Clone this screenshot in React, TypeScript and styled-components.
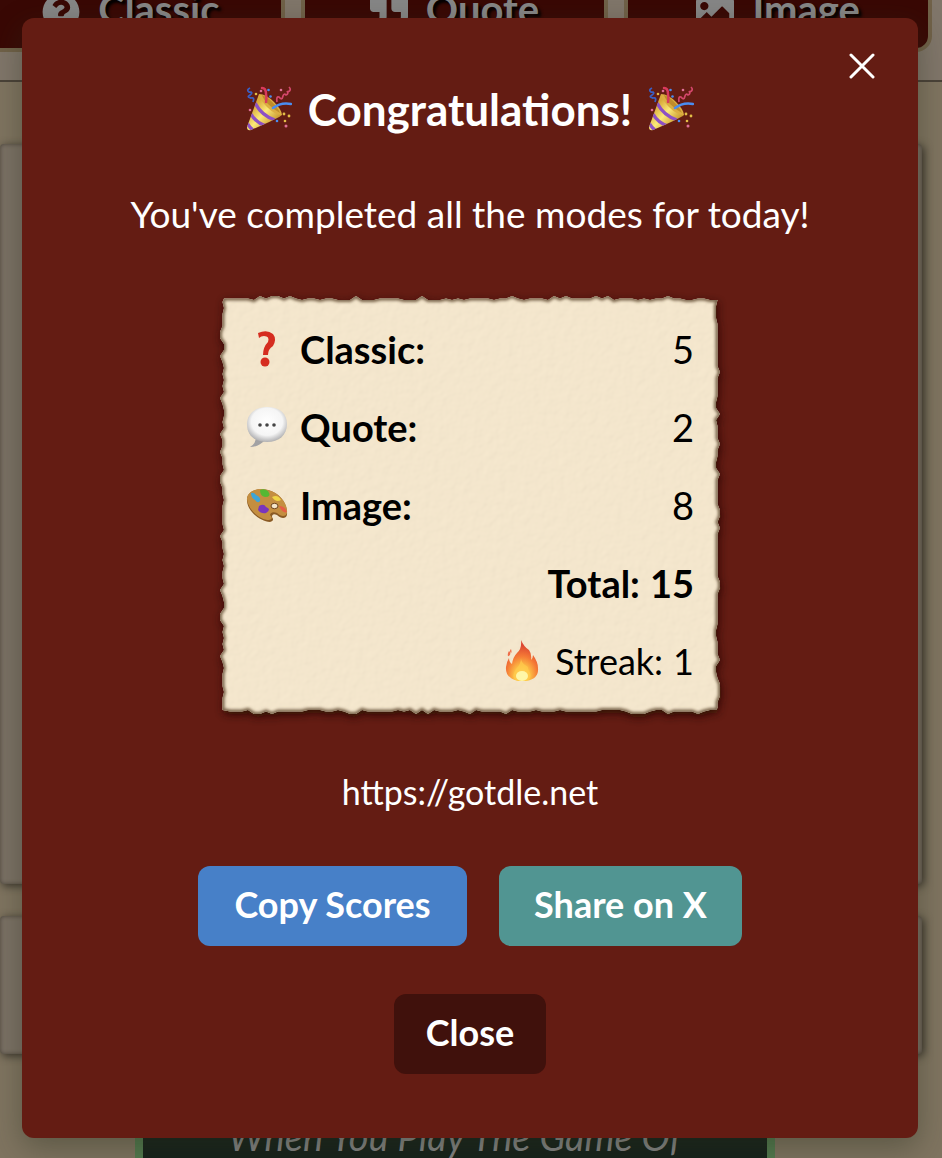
import React from "react";
import styled, { createGlobalStyle } from "styled-components";
import { FaImage, FaQuestionCircle, FaQuoteRight } from "react-icons/fa";

const GlobalStyle = createGlobalStyle`
  *, *::before, *::after { box-sizing: border-box; }
  body {
    margin: 0;
    background: #7f7460;
    font-family: Lato, "Liberation Sans", sans-serif;
  }
  h2, p, dl, dt, dd { margin: 0; }
  svg { display: block; flex: none; }
`;

const Screen = styled.div`
  position: relative;
  min-height: 100vh;
  overflow: hidden;
`;

/* ---------- dimmed page behind the dialog ---------- */

const Backdrop = styled.div`
  position: absolute;
  inset: 0;
  display: flex;
  flex-direction: column;
  overflow: hidden;
  background: #7f7460;
`;

const ModeBar = styled.nav`
  display: flex;
  gap: 16px;
  flex: none;
  margin-top: -48px;
  padding: 0 10px 28px 0;
  margin-left: -23px;
  background: #80766a;
  border-bottom: 2px solid #4a4238;
`;

const ModeTab = styled.button`
  display: flex;
  flex: 1;
  align-items: center;
  justify-content: center;
  gap: 18px;
  height: 100px;
  padding: 20px 0 0;
  border: 4px solid #706148;
  border-radius: 16px;
  background: #390804;
  color: #868686;
  font-family: inherit;
  font-size: 40px;
  line-height: 48px;
  font-weight: 700;
  text-shadow: 3px 3px 3px #000;
`;

const ModeName = styled.span`
  padding-bottom: 6px;
`;

const PaperPanel = styled.div<{ $height: number; $gap: number }>`
  flex: none;
  height: ${(p) => p.$height}px;
  margin: ${(p) => p.$gap}px 20px 0 0;
  border-radius: 4px;
  background: #7b7165;
  box-shadow: 2px 2px 8px #38322a, inset 0 0 4px #4b443b;
`;

const QuoteBox = styled.blockquote`
  flex: none;
  align-self: center;
  width: 640px;
  max-width: 80%;
  margin: 34px 32px 0 0;
  padding: 24px 0;
  border: 8px solid #527a4e;
  border-top-width: 0;
  background: #16211a;
  color: #858585;
  font-size: 38px;
  line-height: 48px;
  font-style: italic;
  text-align: center;
  white-space: nowrap;
`;

/* ---------- dialog ---------- */

const DialogLayer = styled.div`
  position: relative;
  min-height: 100vh;
  padding: 18px 24px 20px 22px;
`;

const Dialog = styled.section`
  position: relative;
  display: flex;
  flex-direction: column;
  align-items: center;
  padding: 66px 24px 64px;
  border-radius: 12px;
  background: #641c13;
  color: #fff;
  box-shadow: 0 10px 30px rgba(40, 44, 28, 0.4);
`;

const DismissButton = styled.button`
  position: absolute;
  top: 24px;
  right: 32px;
  display: grid;
  place-items: center;
  width: 48px;
  height: 48px;
  padding: 0;
  border: 0;
  background: none;
  color: #fff;
`;

const Title = styled.h2`
  display: flex;
  align-items: center;
  gap: 16px;
  font-size: 44px;
  line-height: 50px;
  font-weight: 700;
`;

const Message = styled.p`
  margin-top: 56px;
  font-size: 37px;
  line-height: 48px;
`;

const Parchment = styled.div`
  position: relative;
  width: 500px;
  max-width: 100%;
  margin-top: 58px;
  padding: 14px 26px;
  color: #000;
  font-size: 38px;
  line-height: 48px;
`;

const ParchmentSheet = styled.svg`
  position: absolute;
  inset: 0;
  width: 100%;
  height: 100%;
  overflow: visible;
`;

const ScoreList = styled.dl`
  position: relative;
`;

const ScoreRow = styled.div<{ $end?: boolean; $bold?: boolean }>`
  display: flex;
  align-items: center;
  justify-content: ${(p) => (p.$end ? "flex-end" : "space-between")};
  gap: 10px;
  height: 78px;
  font-size: ${(p) => (p.$end && !p.$bold ? 36 : 38)}px;
  font-weight: ${(p) => (p.$bold ? 700 : 400)};
`;

const ScoreName = styled.dt<{ $bold?: boolean }>`
  display: flex;
  align-items: center;
  gap: 12px;
  font-weight: ${(p) => (p.$bold ? 700 : 400)};
`;

const SiteLink = styled.a`
  margin-top: 50px;
  color: #fff;
  font-size: 34px;
  line-height: 56px;
  text-decoration: none;
`;

const Actions = styled.div`
  display: flex;
  flex-wrap: wrap;
  justify-content: center;
  gap: 32px;
  margin-top: 46px;
`;

const ActionButton = styled.button<{ $color: string; $width: number }>`
  min-width: ${(p) => p.$width}px;
  height: 80px;
  padding: 0 32px 4px;
  border: 0;
  border-radius: 12px;
  background: ${(p) => p.$color};
  color: #fff;
  font-family: inherit;
  font-size: 36px;
  line-height: 48px;
  font-weight: 700;
`;

const CloseRow = styled.div`
  margin-top: 48px;
`;

/* ---------- drawings ---------- */

const PartyPopper = ({ id }: { id: string }) => (
  <svg width="46" height="46" viewBox="0 0 46 46" fill="none" aria-hidden="true">
    <defs>
      <linearGradient id={`${id}-cone`} x1="8" y1="20" x2="28" y2="38" gradientUnits="userSpaceOnUse">
        <stop offset="0" stopColor="#d9a93a" />
        <stop offset=".45" stopColor="#fbe978" />
        <stop offset="1" stopColor="#c8962c" />
      </linearGradient>
      <clipPath id={`${id}-clip`}>
        <path d="M13 8 36 29Q33 32 5 44Q1 45 1 41Z" />
      </clipPath>
    </defs>
    <path d="M13 8 36 29Q33 32 5 44Q1 45 1 41Z" fill={`url(#${id}-cone)`} />
    <g clipPath={`url(#${id}-clip)`} stroke="#8d51c4" strokeWidth="3.4">
      <path d="M9 17Q16 30 29 34" />
      <path d="M5 28Q10 37 20 40" />
      <path d="M1 37Q4 42 8 45" />
    </g>
    <path d="M13 8Q20 8 28 16Q36 24 36 29Q29 29 21 21Q14 14 13 8Z" fill="#dcae42" />
    <path d="M16 9Q22 11 29 19Q33 24 34 27Q27 23 22 18Q17 13 16 9Z" fill="#bf8c2b" />
    <path d="M16 2Q20 2 20 8Q21 12 20 16" stroke="#d93a5c" strokeWidth="2.5" strokeLinecap="round" />
    <path d="M27 22Q35 16 45 18" stroke="#4a8df0" strokeWidth="2.5" strokeLinecap="round" />
    <path d="M4 2Q0 4 3 6Q8 6 4 9Q0 11 5 12Q9 11 7 16" stroke="#3a5fc4" strokeWidth="1.8" />
    <path d="M31 16Q30 10 33 11Q36 15 37 10Q38 7 40 9Q43 8 41 5M43 1Q46 4 42 6" stroke="#d4476b" strokeWidth="1.7" />
    <g fill="#4a8df0"><circle cx="22.500" cy="4" r="1.300" /><circle cx="24.500" cy="10.500" r="1.300" /><circle cx="31" cy="35" r="1.300" /></g>
    <g fill="#e3bd46"><circle cx="10" cy="8" r="1.300" /><circle cx="38" cy="28" r="1.400" /><circle cx="43" cy="30" r="1.400" /><circle cx="39" cy="35" r="1.300" /></g>
    <g fill="#df6f96"><circle cx="4" cy="24" r="1.300" /><circle cx="15" cy="5" r="1.300" /><circle cx="35" cy="4" r="1.300" /><circle cx="40" cy="40" r="1.500" /></g>
  </svg>
);

const RedQuestion = () => (
  <svg width="42" height="42" viewBox="0 0 42 42" aria-hidden="true">
    <path d="M12 5Q21 1 27 6Q31 11 27 18Q22 21 22 27H17Q17 19 22 14Q24 8 18 8Q15 8 13 10Z" fill="#d52d20" />
    <circle cx="19" cy="34" r="4.500" fill="#d52d20" />
  </svg>
);

const SpeechBalloon = () => (
  <svg width="42" height="42" viewBox="0 0 42 42" aria-hidden="true">
    <defs>
      <radialGradient id="balloon" cx=".5" cy=".42" r=".6">
        <stop offset="0" stopColor="#fff" />
        <stop offset=".65" stopColor="#f5f5f5" />
        <stop offset="1" stopColor="#a9a9ab" />
      </radialGradient>
    </defs>
    <path d="M10 30Q10 38 4 41Q13 41 19 34Z" fill="#a2a2a4" />
    <path d="M21 1C34 1 41 8 41 18C41 29 33 36 21 36C8 36 1 29 1 18C1 8 9 1 21 1Z" fill="url(#balloon)" />
    <g fill="#454545"><circle cx="14" cy="19" r="1.800" /><circle cx="21" cy="19" r="1.800" /><circle cx="28" cy="19" r="1.800" /></g>
  </svg>
);

const Palette = () => (
  <svg width="42" height="42" viewBox="0 0 42 42" aria-hidden="true">
    <path d="M1 17C0 8 11 3 22 6C34 9 42 20 41 31C40 35 35 35 31 31Q26 29 26 33Q29 37 24 38C14 37 2 28 1 17Z" fill="#8a5a24" />
    <path d="M1 15C1 7 12 3 22 6C34 9 42 20 41 29C40 33 35 33 31 29Q25 27 24 31Q28 35 23 36C14 36 2 26 1 15Z" fill="#c48e40" />
    <ellipse cx="28.500" cy="22" rx="3.500" ry="2.700" fill="#f5e6ca" stroke="#6d431c" />
    <path d="M5 9Q8 8 10 11Q15 13 14 17Q12 20 9 16Q5 14 5 9Z" fill="#3ea5d8" />
    <path d="M14 6Q18 4 22 7Q26 13 19 13Q14 12 14 6Z" fill="#55b833" />
    <path d="M26 13Q32 10 35 16Q30 19 26 13Z" fill="#f0d544" />
    <path d="M33 22Q39 22 41 28Q37 30 33 22Z" fill="#e65c45" />
    <path d="M13 22Q18 19 20 23Q26 25 20 29Q15 30 12 26Z" fill="#7a35bd" />
  </svg>
);

const Flame = () => (
  <svg width="42" height="42" viewBox="0 0 42 42" aria-hidden="true">
    <defs>
      <radialGradient id="flame" cx=".5" cy=".88" r=".75">
        <stop offset="0" stopColor="#fff477" />
        <stop offset=".3" stopColor="#fdc547" />
        <stop offset=".65" stopColor="#f57a35" />
        <stop offset="1" stopColor="#dc4632" />
      </radialGradient>
    </defs>
    <path d="M20 0Q23 7 28 10Q31 14 30 20Q32 18 32 15Q37 22 37 28Q38 39 25 41H17Q4 38 5 27Q6 21 8 18Q8 22 11 24Q12 17 16 13Q21 9 20 0Z" fill="url(#flame)" />
    <path d="M8 11Q10 12 9 15Q6 18 7 13ZM10 9Q8 11 10 13Q11 12 10 9Z" fill="#ef6d48" />
    <path d="M20 18Q20 24 15 29Q9 38 17 41H25Q33 38 27 29Q28 27 24 25Q20 22 20 18Z" fill="#ffc94c" opacity=".75" />
    <ellipse cx="21" cy="36" rx="6" ry="5" fill="#fffbb0" opacity=".9" />
  </svg>
);

const CrossIcon = () => (
  <svg width="26" height="26" viewBox="0 0 26 26" stroke="currentColor" strokeWidth="3" strokeLinecap="round" aria-hidden="true">
    <path d="M2 2 24 24M24 2 2 24" />
  </svg>
);

/* Walks round the sheet and nudges each point in or out for a torn edge. */
function tornEdge(width: number, height: number) {
  let seed = 17;
  const jitter = () => {
    seed = (seed * 1103 + 12345) % 65536;
    const n = seed / 65536;
    return n > 0.8 ? 0 : n < 0.3 ? 4 : 2.5;
  };
  const step = 6;
  const points: string[] = [];
  for (let x = 4; x < width - 4; x += step) points.push(`${x} ${jitter()}`);
  for (let y = 4; y < height - 4; y += step) points.push(`${width - jitter()} ${y}`);
  for (let x = width - 4; x > 4; x -= step) points.push(`${x} ${height - jitter()}`);
  for (let y = height - 4; y > 4; y -= step) points.push(`${jitter()} ${y}`);
  return `M${points.join("L")}Z`;
}

const sheetPath = tornEdge(500, 418);

const Sheet = () => (
  <ParchmentSheet viewBox="0 0 500 418" preserveAspectRatio="none" aria-hidden="true">
    <defs>
      <filter id="grain" x="0" y="0" width="100%" height="100%">
        <feTurbulence type="fractalNoise" baseFrequency=".12" numOctaves="2" seed="4" result="noise" />
        <feDiffuseLighting in="noise" lightingColor="#f7ead2" surfaceScale=".6" diffuseConstant="1.100" result="lit">
          <feDistantLight azimuth="225" elevation="62" />
        </feDiffuseLighting>
        <feComposite in="lit" in2="SourceAlpha" operator="in" />
      </filter>
      <filter id="cast" x="-10%" y="-10%" width="120%" height="120%">
        <feGaussianBlur stdDeviation="4" />
      </filter>
      <filter id="rim">
        <feGaussianBlur stdDeviation="1.500" />
      </filter>
      <clipPath id="sheet-clip"><path d={sheetPath} /></clipPath>
    </defs>
    <path d={sheetPath} fill="#260704" opacity=".9" filter="url(#cast)" transform="translate(1 3)" />
    <path d={sheetPath} fill="#f4e6cc" />
    <path d={sheetPath} fill="#f4e6cc" filter="url(#grain)" opacity=".3" />
    <g clipPath="url(#sheet-clip)">
      <path d={sheetPath} fill="none" stroke="#77624a" strokeWidth="4" filter="url(#rim)" />
    </g>
  </ParchmentSheet>
);

const modes = [
  { name: "Classic", icon: <FaQuestionCircle size={38} /> },
  { name: "Quote", icon: <FaQuoteRight size={38} /> },
  { name: "Image", icon: <FaImage size={38} /> },
];

const scores = [
  { name: "Classic:", value: 5, icon: <RedQuestion /> },
  { name: "Quote:", value: 2, icon: <SpeechBalloon /> },
  { name: "Image:", value: 8, icon: <Palette /> },
];

export default function App() {
  return (
    <Screen>
      <GlobalStyle />
      <Backdrop aria-hidden="true">
        <ModeBar>
          {modes.map((mode) => (
            <ModeTab key={mode.name} type="button" tabIndex={-1}>
              {mode.icon}
              <ModeName>{mode.name}</ModeName>
            </ModeTab>
          ))}
        </ModeBar>
        <PaperPanel $height={740} $gap={62} />
        <PaperPanel $height={138} $gap={32} />
        <QuoteBox>When You Play The Game Of</QuoteBox>
      </Backdrop>

      <DialogLayer>
        <Dialog role="dialog" aria-modal="true" aria-labelledby="dialog-title">
          <DismissButton type="button" aria-label="Dismiss">
            <CrossIcon />
          </DismissButton>
          <Title id="dialog-title">
            <PartyPopper id="left" />
            Congratulations!
            <PartyPopper id="right" />
          </Title>
          <Message>You've completed all the modes for today!</Message>

          <Parchment>
            <Sheet />
            <ScoreList>
              {scores.map((score) => (
                <ScoreRow key={score.name}>
                  <ScoreName $bold>
                    {score.icon}
                    {score.name}
                  </ScoreName>
                  <dd>{score.value}</dd>
                </ScoreRow>
              ))}
              <ScoreRow $end $bold>
                <ScoreName $bold>Total:</ScoreName>
                <dd>15</dd>
              </ScoreRow>
              <ScoreRow $end>
                <ScoreName>
                  <Flame />
                  Streak:
                </ScoreName>
                <dd>1</dd>
              </ScoreRow>
            </ScoreList>
          </Parchment>

          <SiteLink href="https://gotdle.net">https://gotdle.net</SiteLink>

          <Actions>
            <ActionButton type="button" $color="#4780c8" $width={269}>
              Copy Scores
            </ActionButton>
            <ActionButton type="button" $color="#519592" $width={243}>
              Share on X
            </ActionButton>
          </Actions>
          <CloseRow>
            <ActionButton type="button" $color="#40110c" $width={152}>
              Close
            </ActionButton>
          </CloseRow>
        </Dialog>
      </DialogLayer>
    </Screen>
  );
}
